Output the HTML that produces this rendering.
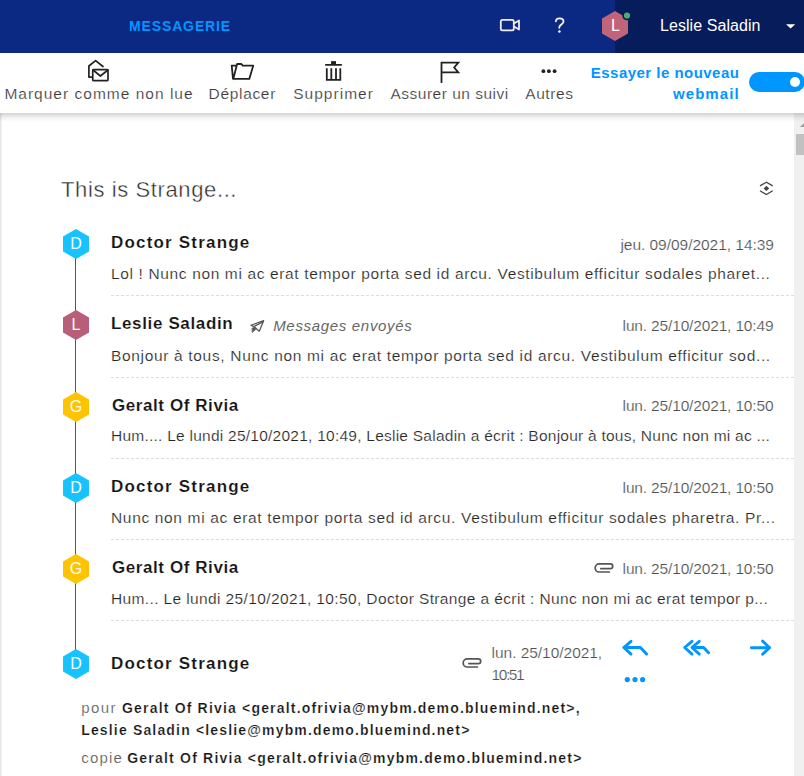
<!DOCTYPE html>
<html><head><meta charset="utf-8">
<style>
*{box-sizing:border-box;margin:0;padding:0}
html,body{width:804px;height:776px;overflow:hidden;background:#fff;font-family:"Liberation Sans",sans-serif}
.t{position:absolute;white-space:nowrap;line-height:1}
.a{position:absolute;display:block}
</style></head><body>
<div class="a" style="left:0;top:0;width:804px;height:53px;background:#0b2883"></div>
<div class="a" style="left:615px;top:0;width:189px;height:53px;background:#071c5a"></div>
<div class="t" id="t0" style="left:129.00px;top:19.15px;font-size:14px;color:#0096ff;font-weight:bold;letter-spacing:0.867px;font-style:normal;">MESSAGERIE</div>
<svg class="a" style="left:499px;top:18px" width="22" height="14" viewBox="0 0 22 14"><rect x="1.8" y="1.8" width="13" height="10.6" rx="1.6" fill="none" stroke="#eee" stroke-width="1.8"/><path d="M15 5.5 L20 2.5 L20 11.5 L15 8.5" fill="none" stroke="#eee" stroke-width="1.8" stroke-linejoin="round"/></svg>
<svg class="a" style="left:548px;top:12px" width="24" height="26" viewBox="0 0 24 26" fill="none" stroke="#f4f4f4" stroke-width="1.8" stroke-linecap="round"><path d="M7.9 9.3 C7.9 7.1 9.6 6.3 11.5 6.3 C13.6 6.3 15.5 7.5 15.5 9.6 C15.5 11.7 13.2 12.3 11.9 13.8 C11.4 14.4 11.3 15 11.3 15.8"/><circle cx="11.4" cy="19.6" r="1.25" fill="#f4f4f4" stroke="none"/></svg>
<svg class="a" style="left:601px;top:10px" width="34" height="32" viewBox="0 0 34 32"><polygon points="14,1 27,8.5 27,23.5 14,31 1,23.5 1,8.5" fill="#c0647a"/><circle cx="26" cy="5.5" r="4.8" fill="#071c5a"/><circle cx="26" cy="5.5" r="3.1" fill="#4caf6a"/><text x="14.5" y="21.2" text-anchor="middle" font-family="Liberation Sans" font-size="16" fill="#fff">L</text></svg>
<div class="t" id="t1" style="left:660.00px;top:18.46px;font-size:16px;color:#fff;font-weight:normal;letter-spacing:0.062px;font-style:normal;">Leslie Saladin</div>
<svg class="a" style="left:785.8px;top:23.8px" width="10" height="6" viewBox="0 0 10 6"><path d="M0 0.2 L9.2 0.2 L4.6 4.4Z" fill="#fff"/></svg>
<div class="a" style="left:0;top:113px;width:2px;height:663px;background:linear-gradient(90deg,#e2e2e2,#f6f6f6)"></div>
<div class="t" id="t2" style="left:4.40px;top:85.88px;font-size:15.5px;color:#383838;font-weight:normal;letter-spacing:1.010px;font-style:normal;-webkit-text-stroke:0.2px #fff;">Marquer comme non lue</div>
<div class="t" id="t3" style="left:208.60px;top:85.88px;font-size:15.5px;color:#383838;font-weight:normal;letter-spacing:0.671px;font-style:normal;-webkit-text-stroke:0.2px #fff;">Déplacer</div>
<div class="t" id="t4" style="left:293.20px;top:85.88px;font-size:15.5px;color:#383838;font-weight:normal;letter-spacing:1.025px;font-style:normal;-webkit-text-stroke:0.2px #fff;">Supprimer</div>
<div class="t" id="t5" style="left:390.40px;top:85.88px;font-size:15.5px;color:#383838;font-weight:normal;letter-spacing:0.507px;font-style:normal;-webkit-text-stroke:0.2px #fff;">Assurer un suivi</div>
<div class="t" id="t6" style="left:525.20px;top:85.88px;font-size:15.5px;color:#383838;font-weight:normal;letter-spacing:0.600px;font-style:normal;-webkit-text-stroke:0.2px #fff;">Autres</div>
<svg class="a" style="left:84px;top:57px" width="30" height="28" viewBox="0 0 30 28" fill="none" stroke="#222" stroke-width="1.7" stroke-linejoin="round" stroke-linecap="round"><path d="M8.2 20.1 H4.9 V9 L11.6 3.7 L19 9.5"/><rect x="8.75" y="12.6" width="15.25" height="11.1" rx="1"/><path d="M9 13 L16.4 19 L24 13"/></svg>
<svg class="a" style="left:228px;top:58px" width="30" height="28" viewBox="0 0 30 28" fill="none" stroke="#222" stroke-width="1.8" stroke-linejoin="round" stroke-linecap="round"><path d="M8.2 7.65 H3.7 L5 20.9 H21.3 L25.2 7.65 H14.7 L13.4 6 H9.1 L5.4 20.5"/></svg>
<svg class="a" style="left:319px;top:57px" width="30" height="28" viewBox="0 0 30 28" fill="none" stroke="#222" stroke-width="1.8" stroke-linecap="round"><path d="M6.8 7.85 H22.2"/><rect x="12.1" y="4.1" width="4.9" height="3.5" fill="#222" stroke="none"/><path d="M7.8 11.2 V22.8 H21.3 V11.2 M12.3 11.2 V22.8 M17 11.2 V22.8" stroke-linejoin="miter" stroke-linecap="butt"/></svg>
<svg class="a" style="left:435px;top:58px" width="30" height="28" viewBox="0 0 30 28" fill="none" stroke="#222" stroke-width="1.8" stroke-linejoin="miter" stroke-linecap="round"><path d="M6.5 24.2 V4.7 H23.3 L19.2 9.5 L23.3 14.4 H6.5"/></svg>
<svg class="a" style="left:538px;top:66px" width="22" height="10" viewBox="0 0 22 10" fill="#222"><circle cx="5.4" cy="5.2" r="1.9"/><circle cx="10.9" cy="5.2" r="1.9"/><circle cx="16.6" cy="5.2" r="1.9"/></svg>
<div class="t" id="t7" style="left:590.80px;top:64.90px;font-size:15px;color:#0096ff;font-weight:bold;letter-spacing:0.471px;font-style:normal;">Essayer le nouveau</div>
<div class="t" id="t8" style="left:673.00px;top:86.10px;font-size:15px;color:#0096ff;font-weight:bold;letter-spacing:1.067px;font-style:normal;">webmail</div>
<div class="a" style="left:749px;top:72px;width:56px;height:20px;border-radius:10px;background:#0096ff"></div>
<div class="a" style="left:790.3px;top:77px;width:10px;height:10px;border-radius:5px;background:#fff"></div>
<div class="a" style="left:794px;top:113px;width:10px;height:663px;background:#f0f0f0"></div>
<div class="a" style="left:796px;top:134px;width:8px;height:21px;background:#c1c1c1"></div>
<svg class="a" style="left:796px;top:121px" width="8" height="7"><path d="M3.8 6 L8.3 1.6 L12.8 6Z" fill="#a3a3a3"/></svg>
<div class="a" style="left:0;top:113px;width:804px;height:9px;background:linear-gradient(rgba(0,0,0,.17),rgba(0,0,0,.045) 60%,rgba(0,0,0,0))"></div>
<div class="t" id="t9" style="left:61.00px;top:178.88px;font-size:22px;color:#2a2a2a;font-weight:normal;letter-spacing:0.612px;font-style:normal;-webkit-text-stroke:0.4px #fff;">This is Strange...</div>
<svg class="a" style="left:754px;top:176px" width="24" height="24" viewBox="0 0 24 24" fill="none" stroke="#444" stroke-width="1.3"><path d="M6 9.9 L12.4 6.2 L18.7 9.9"/><path d="M6 14.8 L12.4 18.6 L18.7 14.8"/><path d="M12.4 9.7 L15.2 12.4 L12.4 15.1 L9.6 12.4Z" fill="#444" stroke="none"/></svg>
<div class="a" style="left:75px;top:255px;width:1.3px;height:395px;background:#555"></div>
<svg class="a" style="left:63.0px;top:229px" width="26" height="30" viewBox="0 0 26 30"><polygon points="13.0,0 26,7.5 26,22.5 13.0,30 0,22.5 0,7.5" fill="#17c3ff"/><text x="13.0" y="20.3" text-anchor="middle" font-family="Liberation Sans" font-size="16" fill="#fff">D</text></svg>
<div class="t" id="t10" style="left:111.00px;top:234.21px;font-size:17px;color:#141414;font-weight:bold;letter-spacing:1.192px;font-style:normal;-webkit-text-stroke:0.15px #fff;">Doctor Strange</div>
<div class="t" id="t11" style="left:620.40px;top:236.78px;font-size:15.5px;color:#505050;font-weight:normal;letter-spacing:-0.033px;font-style:normal;-webkit-text-stroke:0.2px #fff;">jeu. 09/09/2021, 14:39</div>
<div class="t" id="t12" style="left:111.00px;top:266.38px;font-size:15.5px;color:#262626;font-weight:normal;letter-spacing:0.640px;font-style:normal;-webkit-text-stroke:0.2px #fff;">Lol ! Nunc non mi ac erat tempor porta sed id arcu. Vestibulum efficitur sodales pharet...</div>
<div class="a" style="left:111px;top:295px;width:683px;height:1px;background-image:linear-gradient(90deg,#dcdcdc 3px,transparent 3px);background-size:5px 1px"></div>
<svg class="a" style="left:63.0px;top:310px" width="26" height="30" viewBox="0 0 26 30"><polygon points="13.0,0 26,7.5 26,22.5 13.0,30 0,22.5 0,7.5" fill="#b85e78"/><text x="13.0" y="20.3" text-anchor="middle" font-family="Liberation Sans" font-size="16" fill="#fff">L</text></svg>
<div class="t" id="t13" style="left:111.00px;top:315.46px;font-size:17px;color:#141414;font-weight:bold;letter-spacing:0.638px;font-style:normal;-webkit-text-stroke:0.15px #fff;">Leslie Saladin</div>
<div class="t" id="t14" style="left:622.60px;top:317.68px;font-size:15.5px;color:#505050;font-weight:normal;letter-spacing:-0.157px;font-style:normal;-webkit-text-stroke:0.2px #fff;">lun. 25/10/2021, 10:49</div>
<div class="t" id="t15" style="left:111.00px;top:347.53px;font-size:15.5px;color:#262626;font-weight:normal;letter-spacing:0.670px;font-style:normal;-webkit-text-stroke:0.2px #fff;">Bonjour à tous, Nunc non mi ac erat tempor porta sed id arcu. Vestibulum efficitur sod...</div>
<div class="a" style="left:111px;top:377px;width:683px;height:1px;background-image:linear-gradient(90deg,#dcdcdc 3px,transparent 3px);background-size:5px 1px"></div>
<svg class="a" style="left:245px;top:315px" width="25" height="22" viewBox="0 0 25 22" fill="none" stroke="#555" stroke-width="1.25" stroke-linejoin="round" stroke-linecap="round"><path d="M7.8 11.2 L5.9 10.3 L18.7 5.6 L14.3 16.2 L10 12.6"/><path d="M8.2 11.9 L17.9 6.9"/><path d="M7.2 13.2 L10 12.2 L10.8 14.3 L7.4 17.5 Z" fill="#555" stroke-width="0.6"/></svg>
<div class="t" id="t16" style="left:273.20px;top:317.70px;font-size:15px;color:#666;font-weight:normal;letter-spacing:0.680px;font-style:italic;">Messages envoyés</div>
<svg class="a" style="left:63.0px;top:392px" width="26" height="30" viewBox="0 0 26 30"><polygon points="13.0,0 26,7.5 26,22.5 13.0,30 0,22.5 0,7.5" fill="#ffc400"/><text x="13.0" y="20.3" text-anchor="middle" font-family="Liberation Sans" font-size="16" fill="#fff">G</text></svg>
<div class="t" id="t17" style="left:112.00px;top:396.71px;font-size:17px;color:#141414;font-weight:bold;letter-spacing:0.579px;font-style:normal;-webkit-text-stroke:0.15px #fff;">Geralt Of Rivia</div>
<div class="t" id="t18" style="left:622.60px;top:398.38px;font-size:15.5px;color:#505050;font-weight:normal;letter-spacing:-0.157px;font-style:normal;-webkit-text-stroke:0.2px #fff;">lun. 25/10/2021, 10:50</div>
<div class="t" id="t19" style="left:111.00px;top:427.88px;font-size:15.5px;color:#262626;font-weight:normal;letter-spacing:0.245px;font-style:normal;-webkit-text-stroke:0.2px #fff;">Hum.... Le lundi 25/10/2021, 10:49, Leslie Saladin a écrit : Bonjour à tous, Nunc non mi ac ...</div>
<div class="a" style="left:111px;top:458px;width:683px;height:1px;background-image:linear-gradient(90deg,#dcdcdc 3px,transparent 3px);background-size:5px 1px"></div>
<svg class="a" style="left:63.0px;top:473px" width="26" height="30" viewBox="0 0 26 30"><polygon points="13.0,0 26,7.5 26,22.5 13.0,30 0,22.5 0,7.5" fill="#17c3ff"/><text x="13.0" y="20.3" text-anchor="middle" font-family="Liberation Sans" font-size="16" fill="#fff">D</text></svg>
<div class="t" id="t20" style="left:111.00px;top:477.96px;font-size:17px;color:#141414;font-weight:bold;letter-spacing:1.192px;font-style:normal;-webkit-text-stroke:0.15px #fff;">Doctor Strange</div>
<div class="t" id="t21" style="left:622.60px;top:480.38px;font-size:15.5px;color:#505050;font-weight:normal;letter-spacing:-0.157px;font-style:normal;-webkit-text-stroke:0.2px #fff;">lun. 25/10/2021, 10:50</div>
<div class="t" id="t22" style="left:111.00px;top:510.38px;font-size:15.5px;color:#262626;font-weight:normal;letter-spacing:0.660px;font-style:normal;-webkit-text-stroke:0.2px #fff;">Nunc non mi ac erat tempor porta sed id arcu. Vestibulum efficitur sodales pharetra. Pr...</div>
<div class="a" style="left:111px;top:539px;width:683px;height:1px;background-image:linear-gradient(90deg,#dcdcdc 3px,transparent 3px);background-size:5px 1px"></div>
<svg class="a" style="left:63.0px;top:554px" width="26" height="30" viewBox="0 0 26 30"><polygon points="13.0,0 26,7.5 26,22.5 13.0,30 0,22.5 0,7.5" fill="#ffc400"/><text x="13.0" y="20.3" text-anchor="middle" font-family="Liberation Sans" font-size="16" fill="#fff">G</text></svg>
<div class="t" id="t23" style="left:112.00px;top:559.21px;font-size:17px;color:#141414;font-weight:bold;letter-spacing:0.579px;font-style:normal;-webkit-text-stroke:0.15px #fff;">Geralt Of Rivia</div>
<div class="t" id="t24" style="left:622.60px;top:561.08px;font-size:15.5px;color:#505050;font-weight:normal;letter-spacing:-0.157px;font-style:normal;-webkit-text-stroke:0.2px #fff;">lun. 25/10/2021, 10:50</div>
<div class="t" id="t25" style="left:111.00px;top:591.23px;font-size:15.5px;color:#262626;font-weight:normal;letter-spacing:0.377px;font-style:normal;-webkit-text-stroke:0.2px #fff;">Hum... Le lundi 25/10/2021, 10:50, Doctor Strange a écrit : Nunc non mi ac erat tempor p...</div>
<div class="a" style="left:111px;top:620px;width:683px;height:1px;background-image:linear-gradient(90deg,#dcdcdc 3px,transparent 3px);background-size:5px 1px"></div>
<svg class="a" style="left:590px;top:558px" width="30" height="20" viewBox="0 0 30 20" fill="none" stroke="#555" stroke-width="1.7" stroke-linecap="round"><path d="M19.4 14 H9.3 A4.1 4.1 0 0 1 9.3 5.8 H20.3 A2.4 2.4 0 0 1 20.3 10.6 H10.8"/></svg>
<svg class="a" style="left:63.0px;top:649.4px" width="26" height="30" viewBox="0 0 26 30"><polygon points="13.0,0 26,7.5 26,22.5 13.0,30 0,22.5 0,7.5" fill="#17c3ff"/><text x="13.0" y="20.3" text-anchor="middle" font-family="Liberation Sans" font-size="16" fill="#fff">D</text></svg>
<div class="t" id="t26" style="left:111.00px;top:654.61px;font-size:17px;color:#141414;font-weight:bold;letter-spacing:1.192px;font-style:normal;-webkit-text-stroke:0.15px #fff;">Doctor Strange</div>
<svg class="a" style="left:458px;top:652.5px" width="30" height="20" viewBox="0 0 30 20" fill="none" stroke="#555" stroke-width="1.7" stroke-linecap="round"><path d="M19.4 14 H9.3 A4.1 4.1 0 0 1 9.3 5.8 H20.3 A2.4 2.4 0 0 1 20.3 10.6 H10.8"/></svg>
<div class="t" id="t27" style="left:491.60px;top:645.48px;font-size:15.5px;color:#505050;font-weight:normal;letter-spacing:-0.040px;font-style:normal;-webkit-text-stroke:0.2px #fff;">lun. 25/10/2021,</div>
<div class="t" id="t28" style="left:491.60px;top:667.28px;font-size:15.5px;color:#505050;font-weight:normal;letter-spacing:-1.450px;font-style:normal;-webkit-text-stroke:0.2px #fff;">10:51</div>
<svg class="a" style="left:600px;top:630px" width="190" height="60" viewBox="600 630 190 60" fill="none" stroke="#0096ff" stroke-width="2.9" stroke-linecap="round" stroke-linejoin="round"><path d="M631 641.3 L623.8 647.5 L631 654.1 M623.8 647.5 H640.4 L646.6 654.1"/><path d="M692 641.3 L684.7 647.5 L692 654.1 M699.3 641.3 L692 647.5 L699.3 654.1 M692 647.5 H703.6 L708.6 652.8"/><path d="M751.4 647.7 H769.6 M762.6 641.1 L769.6 647.7 L762.6 654.3"/><circle cx="627.3" cy="679.6" r="2.6" fill="#0096ff" stroke="none"/><circle cx="635" cy="679.6" r="2.6" fill="#0096ff" stroke="none"/><circle cx="642.6" cy="679.6" r="2.6" fill="#0096ff" stroke="none"/></svg>
<div class="t" id="t29" style="left:81.20px;top:700.40px;font-size:15px;color:#5a5a5a;font-weight:normal;letter-spacing:1.467px;font-style:normal;-webkit-text-stroke:0.2px #fff;">pour</div>
<div class="t" id="t30" style="left:122.00px;top:701.25px;font-size:14px;color:#141414;font-weight:bold;letter-spacing:1.182px;font-style:normal;-webkit-text-stroke:0.2px #fff;">Geralt Of Rivia &lt;geralt.ofrivia@mybm.demo.bluemind.net&gt;,</div>
<div class="t" id="t31" style="left:81.20px;top:722.95px;font-size:14px;color:#141414;font-weight:bold;letter-spacing:1.164px;font-style:normal;-webkit-text-stroke:0.2px #fff;">Leslie Saladin &lt;leslie@mybm.demo.bluemind.net&gt;</div>
<div class="t" id="t32" style="left:81.20px;top:749.90px;font-size:15px;color:#5a5a5a;font-weight:normal;letter-spacing:1.200px;font-style:normal;-webkit-text-stroke:0.2px #fff;">copie</div>
<div class="t" id="t33" style="left:127.20px;top:750.75px;font-size:14px;color:#141414;font-weight:bold;letter-spacing:1.213px;font-style:normal;-webkit-text-stroke:0.2px #fff;">Geralt Of Rivia &lt;geralt.ofrivia@mybm.demo.bluemind.net&gt;</div>
</body></html>
